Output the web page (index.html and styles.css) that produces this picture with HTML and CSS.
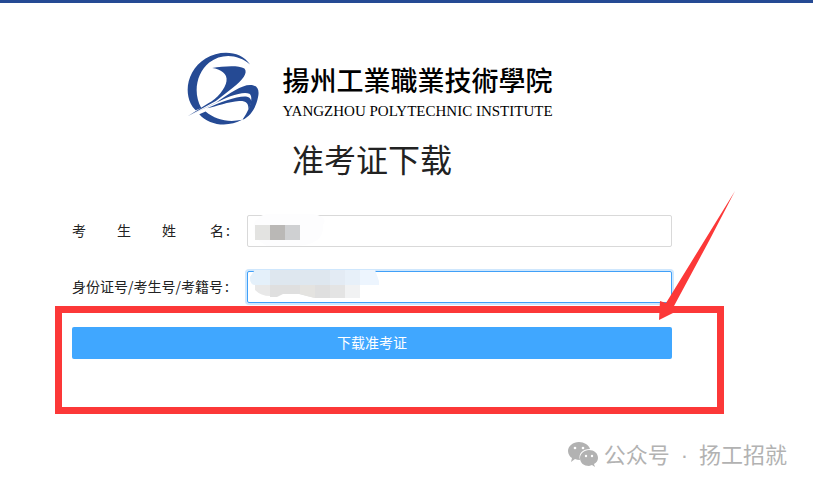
FILE: index.html
```
<!DOCTYPE html>
<html lang="zh-CN">
<head>
    <meta charset="utf-8">
    <meta name="viewport" content="width=device-width, initial-scale=1">
    <title>准考证下载</title>
    <link rel="stylesheet" href="styles.css">
</head>
<body>
<div class="page">
    <div class="content">
        <div class="brand">
            <svg class="brand-logo" viewBox="20 15 220 225" aria-hidden="true">
                <path d="M210 55C182 13 120 10 76 37C26 68 10 128 31 173Q37 186 46 193L63 186C38 142 47 82 87 49C125 20 174 24 210 55Z"/>
                <path d="M57 205L76 197C106 222 144 231 186 222C145 245 87 240 57 205Z"/>
                <path d="M96 66C130 60 175 57 193 67C205 79 187 103 158 125L107 165L22 211L83 173C112 160 136 126 139 106C143 82 121 70 96 66Z"/>
                <path d="M22 211L108 170C150 141 184 117 210 117C233 117 239 132 234 154C228 187 209 213 187 222C209 191 222 153 208 143C188 134 139 153 100 174Z"/>
                <path d="M80 187C121 168 176 148 201 152C220 157 214 176 205 190C206 171 197 164 177 165C145 167 109 181 80 187Z"/>
            </svg>
            <div class="brand-text">
                <div class="brand-cn" lang="zh-TW">揚州工業職業技術學院</div>
                <div class="brand-en">YANGZHOU POLYTECHNIC INSTITUTE</div>
            </div>
        </div>
        <h1 class="title">准考证下载</h1>
        <form class="form">
            <div class="form-item">
                <label class="form-label spread" for="name"><span>考</span><span>生</span><span>姓</span><span>名<i class="colon">:</i></span></label>
                <div class="form-control">
                    <input class="input" type="text" id="name">
                    <svg class="mosaic" width="140" height="40" aria-hidden="true">
                        <path d="M12 7Q14 3 24 3H66Q82 6 76 14Q78 33 50 35H20Q2 26 8 10Z" fill="#fdfdfe"/>
                        <path d="M8 14h15v15h-15z" fill="#e3e3e1"/>
                        <path d="M23 14h15v15h-15z" fill="#bab8b6"/>
                        <path d="M38 14h15v15h-15z" fill="#cfd0d2"/>
                    </svg>
                </div>
            </div>
            <div class="form-item">
                <label class="form-label" for="number">身份证号/考生号/考籍号<i class="colon">:</i></label>
                <div class="form-control">
                    <input class="input active" type="text" id="number">
                    <svg class="mosaic" width="140" height="40" aria-hidden="true">
                        <path d="M8 3H128L132 14V18H8Q3 18 3 10Z" fill="#edf5fe"/>
                        <path d="M8 3h15v15h-15q-5 0-5-8z" fill="#e4f0fa"/>
                        <path d="M23 3h60v15h-60z" fill="#dee7ef"/>
                        <path d="M83 3h15v15h-15z" fill="#e3ebf4"/>
                        <path d="M98 3h15v15h-15z" fill="#e7f0f9"/>
                        <path d="M8 18H23V29Q14 29 8 23Z" fill="#e8e8e8"/>
                        <path d="M23 18H98V31H68L60 29L52 27H36L30 30H23Z" fill="#dfdfdf"/>
                        <path d="M53 18h15v13l-8-2-7-2z" fill="#e4e3e0"/>
                        <path d="M83 18h15v13h-15z" fill="#e4e4e4"/>
                        <path d="M98 18h15v13h-15z" fill="#f1f2f3"/>
                    </svg>
                </div>
            </div>
            <div class="form-submit">
                <button class="btn" type="button">下载准考证</button>
                <div class="mark"></div>
                <svg class="arrow" viewBox="0 0 76 130" aria-hidden="true">
                    <path d="M76 0L7 112L1 110L0 129L20 119L15 115L50 50Z"/>
                </svg>
            </div>
        </form>
    </div>
    <div class="account">
        <svg class="account-icon" viewBox="0 0 30 25" aria-hidden="true">
            <path d="M11 0C5 0 0 4 0 9C0 12 2 15 4 16L3 20L7 17Q9 18 12 18C10 11 15 7 22 7C21 3 16 0 11 0Z"/>
            <path d="M21 8C16 8 12 12 12 16C12 21 16 24 21 24L24 23L27 25L26 22C28 21 30 19 30 16C30 11 26 8 21 8Z"/>
            <g fill="#fff"><circle cx="7" cy="6" r="1.3"/><circle cx="15" cy="6" r="1.3"/><circle cx="18" cy="14" r="1.2"/><circle cx="24" cy="14" r="1.2"/></g>
        </svg>
        <span>公众号 <span class="dot">·</span> 扬工招就</span>
    </div>
</div>
</body>
</html>
```
FILE: styles.css
```
* {
    box-sizing: border-box;
}
body {
    margin: 0;
    background: #fff;
    color: #222;
    font-family: "Noto Sans CJK SC", sans-serif;
    font-size: 14px;
}
.page {
    border-top: 3px solid #254a94;
    padding: 48px 26px 0 72px;
}
.content {
    max-width: 600px;
}
.brand {
    display: flex;
    justify-content: center;
    align-items: center;
    gap: 22px;
    padding-right: 4px;
}
.brand-logo {
    width: 73px;
    height: 75px;
    fill: #254a94;
}
.brand-text {
    padding-top: 8px;
    color: #000;
    white-space: nowrap;
}
.brand-cn {
    font-family: "Noto Sans CJK TC", sans-serif;
    font-size: 27px;
    font-weight: 500;
    line-height: 36px;
}
.brand-en {
    font-family: "Liberation Serif", serif;
    font-size: 15px;
    line-height: 26px;
}
.title {
    margin: 8px 0 33px;
    font-size: 32px;
    font-weight: 400;
    line-height: 48px;
    text-align: center;
}
.form {
    display: flex;
    flex-direction: column;
    gap: 24px;
}
.form-item {
    display: flex;
    align-items: center;
}
.form-label {
    flex: none;
    width: 175px;
    padding: 0 17px 2px 0;
    line-height: 30px;
    white-space: nowrap;
}
.spread {
    display: flex;
    gap: 31px;
}
.spread span:last-child {
    margin-left: auto;
}
.colon {
    margin-left: 2px;
    font-style: normal;
}
.form-control {
    position: relative;
    flex: 1;
}
.input {
    display: block;
    width: 100%;
    height: 32px;
    padding: 4px 11px;
    border: 1px solid #d9d9d9;
    border-radius: 2px;
    outline: none;
    font: inherit;
}
.input.active {
    border-color: #40a0f8;
    box-shadow: 0 0 0 2px #cfe7fd;
}
.mosaic {
    position: absolute;
    top: -4px;
    left: 0;
    pointer-events: none;
}
.form-submit {
    position: relative;
}
.btn {
    display: block;
    width: 100%;
    height: 32px;
    padding: 0 0 2px;
    border: 0;
    border-radius: 2px;
    background: #40a7ff;
    color: #fff;
    font: inherit;
    cursor: pointer;
}
.mark {
    position: absolute;
    top: -21px;
    left: -17px;
    right: -52px;
    height: 108px;
    border: 7px solid #fc3838;
    pointer-events: none;
}
.arrow {
    position: absolute;
    top: -136px;
    right: -63px;
    width: 76px;
    height: 130px;
    fill: #fc3838;
    pointer-events: none;
}
.account {
    display: flex;
    justify-content: flex-end;
    align-items: center;
    gap: 6px;
    margin-top: 78px;
    color: #b2b2b2;
    font-size: 22px;
    line-height: 32px;
}
.account-icon {
    width: 30px;
    height: 25px;
    fill: #b2b2b2;
}
.dot {
    margin: 0 6px;
    font-family: "Liberation Sans", sans-serif;
}
```
